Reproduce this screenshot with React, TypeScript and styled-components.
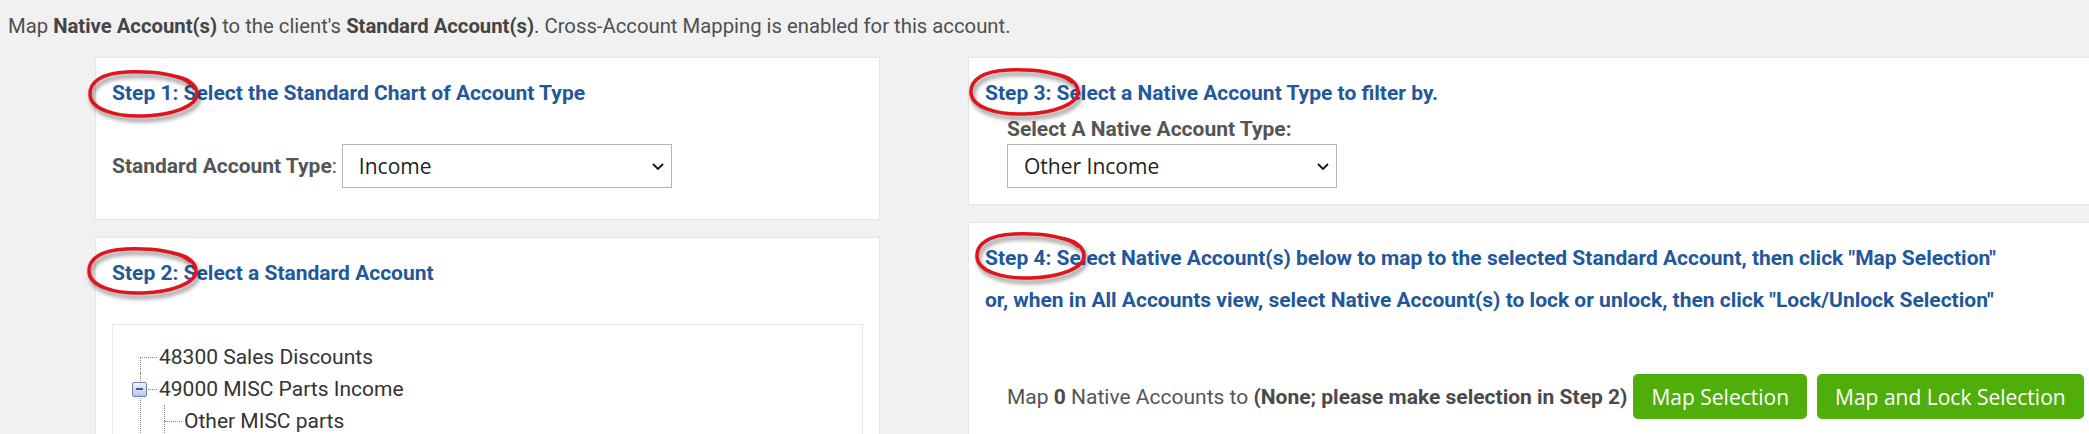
import * as React from 'react';
import styled, { createGlobalStyle } from 'styled-components';

const GlobalStyle = createGlobalStyle`
  html, body {
    margin: 0;
    padding: 0;
    overflow: hidden;
    background: #f1f1f1;
  }
  body {
    font-family: Roboto, "Liberation Sans", sans-serif;
    font-size: 21px;
    color: #4f4f4f;
  }
`;

const Page = styled.div`
  padding: 11px 8px 0 8px;
`;

const Intro = styled.p`
  margin: 0 0 16px 0;
  font-size: 20.3px;
  line-height: 30px;
  white-space: nowrap;

  b {
    color: #444;
  }
`;

const Columns = styled.div`
  display: flex;
  align-items: flex-start;
  gap: 88px;
  margin-left: 87px;
`;

const Column = styled.div<{ $width: number }>`
  display: flex;
  flex-direction: column;
  gap: 17px;
  flex: none;
  width: ${p => p.$width}px;
`;

const Panel = styled.div<{ $top?: number; $bottom: number }>`
  background: #fff;
  border: 1px solid #e6e6e6;
  padding: ${p => p.$top ?? 20}px 16px ${p => p.$bottom}px 16px;
`;

const StepTitle = styled.h4<{ $lh?: number }>`
  position: relative;
  margin: 0;
  font-size: 21px;
  font-weight: 700;
  line-height: ${p => p.$lh ?? 30}px;
  color: #22589b;
  white-space: nowrap;
`;

const RingSvg = styled.svg<{ $left: number; $top: number }>`
  position: absolute;
  left: ${p => p.$left}px;
  top: ${p => p.$top}px;
  overflow: visible;
  pointer-events: none;
  filter: drop-shadow(2px 4px 2px rgba(0, 0, 0, 0.45));
`;

const FieldRow = styled.div`
  display: flex;
  align-items: center;
  gap: 5px;
  margin-top: 36px;
`;

const FieldGroup = styled.div`
  margin: 6px 0 0 22px;
`;

const Label = styled.label`
  display: block;
  font-weight: 700;
  line-height: 30px;
  color: #555;
`;

const SelectWrap = styled.div`
  position: relative;
  width: 330px;
  height: 44px;
  flex: none;
`;

const Select = styled.select`
  appearance: none;
  width: 100%;
  height: 100%;
  border: 1px solid #b5b5b5;
  border-radius: 0;
  background: #fff;
  padding: 0 34px 0 16px;
  font-family: "Open Sans", "Liberation Sans", sans-serif;
  font-size: 21px;
  color: #222;
  outline: none;
`;

const Chevron = styled.svg`
  position: absolute;
  right: 8px;
  top: 19px;
  pointer-events: none;
`;

const TreeBox = styled.div`
  margin-top: 36px;
  border: 1px solid #e8e8e8;
  padding: 16px 0 60px 19px;
`;

const TreeList = styled.ul<{ $root?: boolean }>`
  list-style: none;
  margin: 0;
  padding: 0;

  ${p => p.$root && `& > li:first-child::before { top: 16px; }`}
`;

const TreeNode = styled.li<{ $pad: number; $line: number }>`
  position: relative;
  padding-left: ${p => p.$pad}px;
  line-height: 32px;
  color: #333;
  white-space: nowrap;

  &::before {
    content: '';
    position: absolute;
    left: ${p => p.$line}px;
    top: 0;
    bottom: 0;
    border-left: 1px dotted #888;
  }

  &::after {
    content: '';
    position: absolute;
    left: ${p => p.$line}px;
    top: 16px;
    width: ${p => p.$pad - p.$line - 2}px;
    border-top: 1px dotted #888;
  }
`;

const Toggle = styled.span`
  position: absolute;
  left: 0;
  top: 9px;
  width: 13px;
  height: 13px;
  border: 1px solid #6f85b5;
  border-radius: 2px;
  background: linear-gradient(#f0f4fb, #b6c7e6);
  z-index: 1;

  &::after {
    content: '';
    position: absolute;
    left: 3px;
    top: 5px;
    width: 7px;
    height: 2px;
    background: #3d5c97;
  }
`;

const MapRow = styled.div`
  display: flex;
  align-items: center;
  margin: 53px 0 0 22px;
  white-space: nowrap;
`;

const MapText = styled.span`
  color: #555;

  b {
    color: #4a4a4a;
  }
`;

const Buttons = styled.div`
  display: flex;
  gap: 10px;
  margin-left: 6px;
`;

const GreenButton = styled.button`
  height: 45px;
  padding: 0 18px;
  border: none;
  border-radius: 5px;
  background: #50ae0a;
  color: #fff;
  font-family: "Open Sans", "Liberation Sans", sans-serif;
  font-size: 21px;
  cursor: pointer;
`;

const Ring = ({ left, top }: { left: number; top: number }) => (
  <RingSvg $left={left} $top={top} width="112" height="48" viewBox="0 0 112 48">
    <path
      d="M 104 14 C 95 5, 68 1, 40 2 C 15 3, 2 12, 3 25 C 4 39, 28 47, 57 46 C 86 45, 110 36, 110 24 C 110 15, 101 8, 86 6"
      fill="none"
      stroke="#e0141c"
      strokeWidth="3.5"
      strokeLinecap="round"
    />
  </RingSvg>
);

const AccountSelect = ({ value }: { value: string }) => (
  <SelectWrap>
    <Select defaultValue={value}>
      <option>{value}</option>
    </Select>
    <Chevron width="12" height="7" viewBox="0 0 12 7">
      <path d="M1 1 L6 6 L11 1" fill="none" stroke="#111" strokeWidth="1.8" />
    </Chevron>
  </SelectWrap>
);

export default function App() {
  return (
    <Page>
      <GlobalStyle />
      <Intro>
        Map <b>Native Account(s)</b> to the client's <b>Standard Account(s)</b>. Cross-Account Mapping is enabled for this account.
      </Intro>

      <Columns>
        <Column $width={785}>
          <Panel $bottom={31}>
            <StepTitle>
              <Ring left={-25} top={-8} />
              Step 1: Select the Standard Chart of Account Type
            </StepTitle>
            <FieldRow>
              <Label as="span">
                Standard Account Type<span style={{ fontWeight: 400 }}>:</span>
              </Label>
              <AccountSelect value="Income" />
            </FieldRow>
          </Panel>

          <Panel $bottom={40}>
            <StepTitle>
              <Ring left={-26} top={-11} />
              Step 2: Select a Standard Account
            </StepTitle>
            <TreeBox>
              <TreeList $root>
                <TreeNode $pad={27} $line={8}>48300 Sales Discounts</TreeNode>
                <TreeNode $pad={27} $line={8}>
                  <Toggle />
                  49000 MISC Parts Income
                  <TreeList>
                    <TreeNode $pad={25} $line={5}>Other MISC parts</TreeNode>
                  </TreeList>
                </TreeNode>
              </TreeList>
            </TreeBox>
          </Panel>
        </Column>

        <Column $width={1150}>
          <Panel $bottom={16}>
            <StepTitle>
              <Ring left={-17} top={-10} />
              Step 3: Select a Native Account Type to filter by.
            </StepTitle>
            <FieldGroup>
              <Label>Select A Native Account Type:</Label>
              <AccountSelect value="Other Income" />
            </FieldGroup>
          </Panel>

          <Panel $top={14} $bottom={40}>
            <StepTitle $lh={42}>
              <Ring left={-11} top={-5} />
              Step 4: Select Native Account(s) below to map to the selected Standard Account, then click "Map Selection"
            </StepTitle>
            <StepTitle $lh={42}>
              or, when in All Accounts view, select Native Account(s) to lock or unlock, then click "Lock/Unlock Selection"
            </StepTitle>
            <MapRow>
              <MapText>
                Map <b>0</b> Native Accounts to <b>(None; please make selection in Step 2)</b>
              </MapText>
              <Buttons>
                <GreenButton>Map Selection</GreenButton>
                <GreenButton>Map and Lock Selection</GreenButton>
              </Buttons>
            </MapRow>
          </Panel>
        </Column>
      </Columns>
    </Page>
  );
}
